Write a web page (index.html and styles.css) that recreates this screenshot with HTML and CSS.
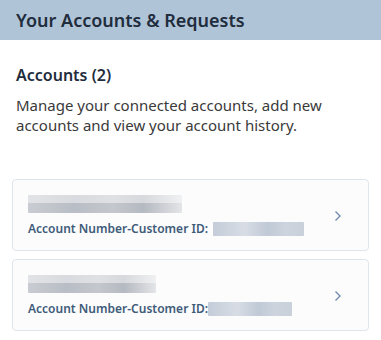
FILE: index.html
```html
<!DOCTYPE html>
<html lang="en">
<head>
  <meta charset="UTF-8" />
  <meta name="viewport" content="width=device-width, initial-scale=1.0"/>
  <title>Your Accounts & Requests</title>
  <link rel="stylesheet" href="styles.css">
</head>
<body>

  <header class="page-header">
    <h1>Your Accounts &amp; Requests</h1>
  </header>

  <section class="intro">
    <h2>Accounts (2)</h2>
    <p>Manage your connected accounts, add new accounts and view your account history.</p>
  </section>

  <div class="account-list">
    <a class="account-card" href="#">
      <div class="account-info">
        <span class="blur blur-name" style="width: 154px"></span>
        <div class="account-id">
          <span>Account Number-Customer ID:</span>
          <span class="blur blur-id" style="width: 91px; margin-left: 5px"></span>
        </div>
      </div>
      <svg class="chevron" width="8" height="12" viewBox="0 0 8 12">
        <path d="M1.5 1.5 L6 6 L1.5 10.5" fill="none" stroke="#6f8db0" stroke-width="1.4"/>
      </svg>
    </a>

    <a class="account-card" href="#">
      <div class="account-info">
        <span class="blur blur-name" style="width: 128px"></span>
        <div class="account-id">
          <span>Account Number-Customer ID:</span>
          <span class="blur blur-id" style="width: 84px; margin-left: 0"></span>
        </div>
      </div>
      <svg class="chevron" width="8" height="12" viewBox="0 0 8 12">
        <path d="M1.5 1.5 L6 6 L1.5 10.5" fill="none" stroke="#6f8db0" stroke-width="1.4"/>
      </svg>
    </a>
  </div>

</body>
</html>
```

FILE: styles.css
```css
body {
  margin: 0;
  font-family: "Noto Sans", "Open Sans", Arial, sans-serif;
  background: #ffffff;
  color: #333;
}

.page-header {
  background: #b0c4d8;
  height: 40px;
  display: flex;
  align-items: center;
  padding: 0 16px;
}

.page-header h1 {
  margin: 0;
  font-size: 18px;
  font-weight: 600;
  color: #1f2d3d;
}

.intro {
  padding: 24px 16px 0;
}

.intro h2 {
  margin: 0 0 9px;
  font-size: 16px;
  font-weight: 600;
  color: #1f2d3d;
}

.intro p {
  margin: 0;
  font-size: 15px;
  line-height: 20px;
  color: #3a3a3a;
}

.account-list {
  padding: 44px 12px 0;
  display: flex;
  flex-direction: column;
  gap: 8px;
}

.account-card {
  display: flex;
  align-items: center;
  justify-content: space-between;
  height: 72px;
  box-sizing: border-box;
  padding: 2px 26px 0 15px;
  border: 1px solid #dfe5ec;
  border-radius: 4px;
  background: #fcfcfd;
  text-decoration: none;
}

.account-info {
  display: flex;
  flex-direction: column;
  gap: 7px;
}

.blur {
  display: inline-block;
  border-radius: 1px;
}

.blur-name {
  height: 18px;
  background:
    linear-gradient(180deg, rgba(255,255,255,0.45) 0 45%, rgba(255,255,255,0) 45%),
    linear-gradient(90deg, #c9ccd2, #b9bdc5 30%, #c4c7cd 55%, #b5b9c1 75%, #e4e5e8);
}

.blur-id {
  height: 14px;
  vertical-align: middle;
  background: linear-gradient(90deg, #c3ccd8, #d8dde5 35%, #c0c9d6 60%, #cdd4de 80%, #c8d0da);
}

.account-id {
  display: flex;
  align-items: center;
  font-size: 12px;
  font-weight: 600;
  color: #3e5b79;
}

.chevron {
  flex-shrink: 0;
}
```
